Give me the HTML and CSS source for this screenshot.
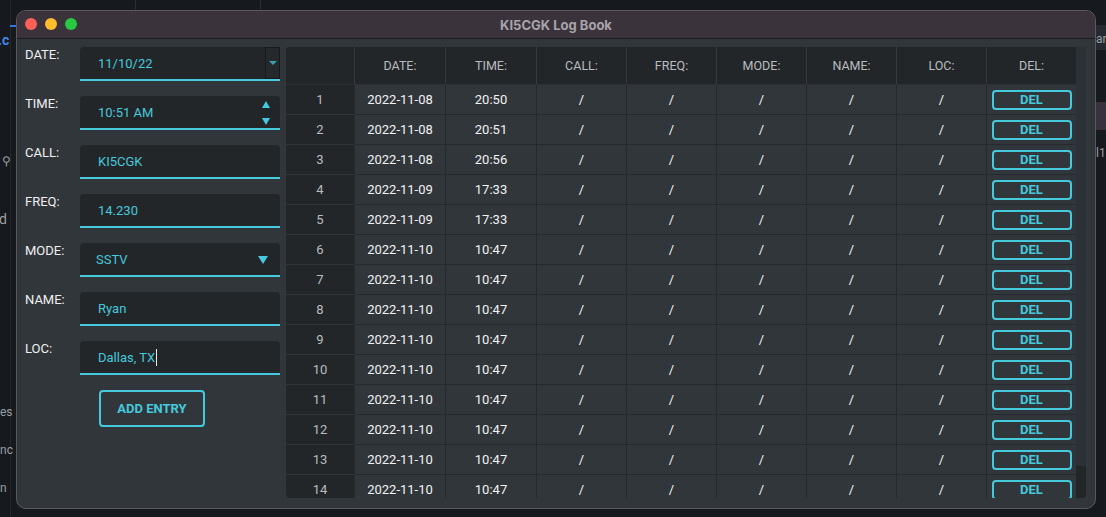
FILE: index.html
```html
<!DOCTYPE html>
<html>
<head>
<meta charset="utf-8">
<link rel="stylesheet" href="styles.css">
</head>
<body>
<div class="backdrop">
  <div class="bd-vline v1"></div>
  <div class="bd-vline v2"></div>
  <div class="bd-left"></div>
  <div class="bd-blue"></div>
  <div class="bd-frag f1">.c</div>
  <div class="bd-frag f2">⚲</div>
  <div class="bd-frag f3">d</div>
  <div class="bd-frag f4">es</div>
  <div class="bd-frag f5">nc</div>
  <div class="bd-frag f6">n</div>
  <div class="bd-right r1"></div>
  <div class="bd-right r2"></div>
  <div class="bd-frag f7">ar</div>
  <div class="bd-frag f8">l1</div>
</div>

<div class="window">
  <div class="titlebar">
    <div class="lights">
      <span class="light red"></span>
      <span class="light yellow"></span>
      <span class="light green"></span>
    </div>
    <div class="title">KI5CGK Log Book</div>
  </div>
  <div class="content">
    <div class="form">
      <div class="field">
        <div class="label">DATE:</div>
        <div class="input">11/10/22
          <div class="date-btn"><span class="tri-small"></span></div>
        </div>
      </div>
      <div class="field">
        <div class="label">TIME:</div>
        <div class="input">10:51 AM
          <div class="spin"><span class="tri-up"></span><span class="tri-down"></span></div>
        </div>
      </div>
      <div class="field">
        <div class="label">CALL:</div>
        <div class="input">KI5CGK</div>
      </div>
      <div class="field">
        <div class="label">FREQ:</div>
        <div class="input">14.230</div>
      </div>
      <div class="field">
        <div class="label">MODE:</div>
        <div class="input combo">SSTV<span class="combo-arrow"></span></div>
      </div>
      <div class="field">
        <div class="label">NAME:</div>
        <div class="input">Ryan</div>
      </div>
      <div class="field">
        <div class="label">LOC:</div>
        <div class="input">Dallas, TX<span class="caret"></span></div>
      </div>
      <button class="add-btn">ADD ENTRY</button>
    </div>

    <div class="table-wrap">
      <div class="tgrid">
        <div class="trow thead">
          <div></div><div>DATE:</div><div>TIME:</div><div>CALL:</div><div>FREQ:</div><div>MODE:</div><div>NAME:</div><div>LOC:</div><div>DEL:</div>
        </div>
        <div class="trow"><div>1</div><div>2022-11-08</div><div>20:50</div><div>/</div><div>/</div><div>/</div><div>/</div><div>/</div><div><span class="del">DEL</span></div></div>
        <div class="trow"><div>2</div><div>2022-11-08</div><div>20:51</div><div>/</div><div>/</div><div>/</div><div>/</div><div>/</div><div><span class="del">DEL</span></div></div>
        <div class="trow"><div>3</div><div>2022-11-08</div><div>20:56</div><div>/</div><div>/</div><div>/</div><div>/</div><div>/</div><div><span class="del">DEL</span></div></div>
        <div class="trow"><div>4</div><div>2022-11-09</div><div>17:33</div><div>/</div><div>/</div><div>/</div><div>/</div><div>/</div><div><span class="del">DEL</span></div></div>
        <div class="trow"><div>5</div><div>2022-11-09</div><div>17:33</div><div>/</div><div>/</div><div>/</div><div>/</div><div>/</div><div><span class="del">DEL</span></div></div>
        <div class="trow"><div>6</div><div>2022-11-10</div><div>10:47</div><div>/</div><div>/</div><div>/</div><div>/</div><div>/</div><div><span class="del">DEL</span></div></div>
        <div class="trow"><div>7</div><div>2022-11-10</div><div>10:47</div><div>/</div><div>/</div><div>/</div><div>/</div><div>/</div><div><span class="del">DEL</span></div></div>
        <div class="trow"><div>8</div><div>2022-11-10</div><div>10:47</div><div>/</div><div>/</div><div>/</div><div>/</div><div>/</div><div><span class="del">DEL</span></div></div>
        <div class="trow"><div>9</div><div>2022-11-10</div><div>10:47</div><div>/</div><div>/</div><div>/</div><div>/</div><div>/</div><div><span class="del">DEL</span></div></div>
        <div class="trow"><div>10</div><div>2022-11-10</div><div>10:47</div><div>/</div><div>/</div><div>/</div><div>/</div><div>/</div><div><span class="del">DEL</span></div></div>
        <div class="trow"><div>11</div><div>2022-11-10</div><div>10:47</div><div>/</div><div>/</div><div>/</div><div>/</div><div>/</div><div><span class="del">DEL</span></div></div>
        <div class="trow"><div>12</div><div>2022-11-10</div><div>10:47</div><div>/</div><div>/</div><div>/</div><div>/</div><div>/</div><div><span class="del">DEL</span></div></div>
        <div class="trow"><div>13</div><div>2022-11-10</div><div>10:47</div><div>/</div><div>/</div><div>/</div><div>/</div><div>/</div><div><span class="del">DEL</span></div></div>
        <div class="trow"><div>14</div><div>2022-11-10</div><div>10:47</div><div>/</div><div>/</div><div>/</div><div>/</div><div>/</div><div><span class="del">DEL</span></div></div>
      </div>
      <div class="vscroll">
        <div class="vtrack"></div>
        <div class="vhandle"></div>
      </div>
    </div>
  </div>
</div>
</body>
</html>
```

FILE: styles.css
```css
html, body {
  margin: 0;
  padding: 0;
}
body {
  width: 1106px;
  height: 517px;
  overflow: hidden;
  background: #16191d;
  font-family: Roboto, "Liberation Sans", sans-serif;
  position: relative;
}

/* desktop backdrop */
.backdrop {
  position: absolute;
  inset: 0;
  z-index: 0;
}
.bd-vline {
  position: absolute;
  top: 0;
  width: 1px;
  height: 10px;
  background: #2c3035;
}
.v1 { left: 135px; }
.v2 { left: 260px; }
.bd-left {
  position: absolute;
  left: 0;
  top: 0;
  width: 10px;
  height: 517px;
  border-right: 1px solid #23272b;
}
.bd-blue {
  position: absolute;
  left: 10px;
  top: 25px;
  width: 6px;
  height: 2px;
  background: #2f74e0;
}
.bd-frag {
  position: absolute;
  font-size: 14px;
  color: #9a9ea3;
  line-height: 16px;
}
.f1 { left: -2px; top: 32px; color: #3f86e8; font-weight: 700; }
.f2 { left: 2px; top: 153px; font-size: 12px; }
.f3 { left: -1px; top: 211px; }
.f4 { left: 0px; top: 404px; font-size: 12px; }
.f5 { left: 0px; top: 442px; font-size: 12px; }
.f6 { left: 0px; top: 480px; font-size: 12px; }
.f7 { left: 1096px; top: 31px; font-size: 12px; }
.f8 { left: 1096px; top: 145px; font-size: 12px; }
.bd-right {
  position: absolute;
  left: 1096px;
  width: 10px;
}
.r1 { top: 25px; height: 25px; background: #262a30; }
.r2 { top: 102px; height: 28px; background: #38323f; }

/* window */
.window {
  position: relative;
  z-index: 1;
  margin: 10px 0 0 16px;
  width: 1080px;
  height: 499px;
  box-sizing: border-box;
  border: 1px solid #5b585d;
  border-radius: 10px;
  background: #31363b;
  overflow: hidden;
  display: flex;
  flex-direction: column;
}
.titlebar {
  height: 27px;
  flex: none;
  background: #3a333b;
  border-bottom: 1px solid #1d1c1f;
  position: relative;
  display: flex;
  align-items: center;
  justify-content: center;
}
.lights {
  position: absolute;
  left: 8px;
  top: 7px;
  display: flex;
  gap: 8px;
}
.light {
  width: 12px;
  height: 12px;
  border-radius: 50%;
  display: block;
}
.red { background: #fe5f57; }
.yellow { background: #febc2e; }
.green { background: #28c840; }
.title {
  font-family: Inter, "Noto Sans", sans-serif;
  font-weight: 700;
  font-size: 13px;
  color: #a9a3ab;
  margin-top: 1px;
}

.content {
  flex: 1;
  display: flex;
  gap: 6px;
  padding: 8px 8px 10px 8px;
}

/* form */
.form {
  width: 255px;
  display: flex;
  flex-direction: column;
  gap: 15px;
}
.field {
  display: flex;
  align-items: flex-start;
}
.label {
  width: 55px;
  font-size: 13px;
  line-height: 15px;
  color: #f0f0f0;
}
.input {
  position: relative;
  width: 200px;
  height: 34px;
  box-sizing: border-box;
  background: #232629;
  border-bottom: 2px solid #45c9dd;
  border-radius: 4px 4px 0 0;
  padding-left: 18px;
  display: flex;
  align-items: center;
  font-size: 13px;
  font-weight: 400;
  color: #45c9dd;
}
.input.combo {
  padding-left: 16px;
}
.date-btn {
  position: absolute;
  right: 0;
  top: 0;
  width: 15px;
  height: 32px;
  box-sizing: border-box;
  background: #25292c;
  border: 1px solid #17191b;
  display: flex;
  align-items: center;
  justify-content: center;
}
.tri-small {
  width: 0;
  height: 0;
  border-left: 4px solid transparent;
  border-right: 4px solid transparent;
  border-top: 4px solid #3a9fae;
}
.spin {
  position: absolute;
  right: 10px;
  top: 5px;
  display: flex;
  flex-direction: column;
  gap: 10px;
}
.tri-up {
  width: 0;
  height: 0;
  border-left: 4px solid transparent;
  border-right: 4px solid transparent;
  border-bottom: 7px solid #45c9dd;
}
.tri-down {
  width: 0;
  height: 0;
  border-left: 4px solid transparent;
  border-right: 4px solid transparent;
  border-top: 7px solid #45c9dd;
}
.combo-arrow {
  position: absolute;
  right: 12px;
  top: 13px;
  width: 0;
  height: 0;
  border-left: 5px solid transparent;
  border-right: 5px solid transparent;
  border-top: 8px solid #45c9dd;
}
.caret {
  display: inline-block;
  width: 1px;
  height: 17px;
  background: #e8e8e8;
  margin-left: 1px;
}
.add-btn {
  margin-left: 74px;
  width: 106px;
  height: 37px;
  box-sizing: border-box;
  background: transparent;
  border: 2px solid #45c9dd;
  border-radius: 4px;
  color: #45c9dd;
  font-family: Roboto, "Liberation Sans", sans-serif;
  font-weight: 700;
  font-size: 13px;
  padding: 0;
}

/* table */
.table-wrap {
  width: 800px;
  height: 451px;
  display: flex;
  overflow: hidden;
  border-radius: 3px 3px 4px 4px;
  background: #31363b;
}
.tgrid {
  width: 790px;
  flex: none;
}
.trow {
  display: grid;
  grid-template-columns: 68px 91px 91px repeat(6, 90px);
  height: 30px;
}
.trow > div {
  box-sizing: border-box;
  border-left: 1px solid #26292d;
  border-bottom: 1px solid #26292d;
  display: flex;
  align-items: center;
  justify-content: center;
  font-size: 13px;
  font-weight: 400;
  color: #f2f2f2;
}
.trow > div:first-child {
  border-left: 0;
  background: #232629;
  border-bottom-color: #2f3337;
  color: #b9bcbf;
  font-weight: 400;
}
.trow.thead {
  height: 38px;
}
.trow.thead > div {
  background: #232629;
  border-left-color: #363a3f;
  border-bottom-color: #2b2f33;
  color: #b9bcbf;
  font-weight: 400;
  font-size: 12.5px;
}
.trow.thead > div:first-child {
  border-left: 0;
}
.del {
  width: 80px;
  height: 20px;
  box-sizing: border-box;
  border: 2px solid #45c9dd;
  border-radius: 4px;
  color: #45c9dd;
  font-weight: 700;
  font-size: 13px;
  display: flex;
  align-items: center;
  justify-content: center;
}
.vscroll {
  width: 10px;
  flex: none;
  display: flex;
  flex-direction: column;
}
.vtrack {
  height: 419px;
  background: #2b3136;
}
.vhandle {
  flex: 1;
  background: #232629;
}
```
